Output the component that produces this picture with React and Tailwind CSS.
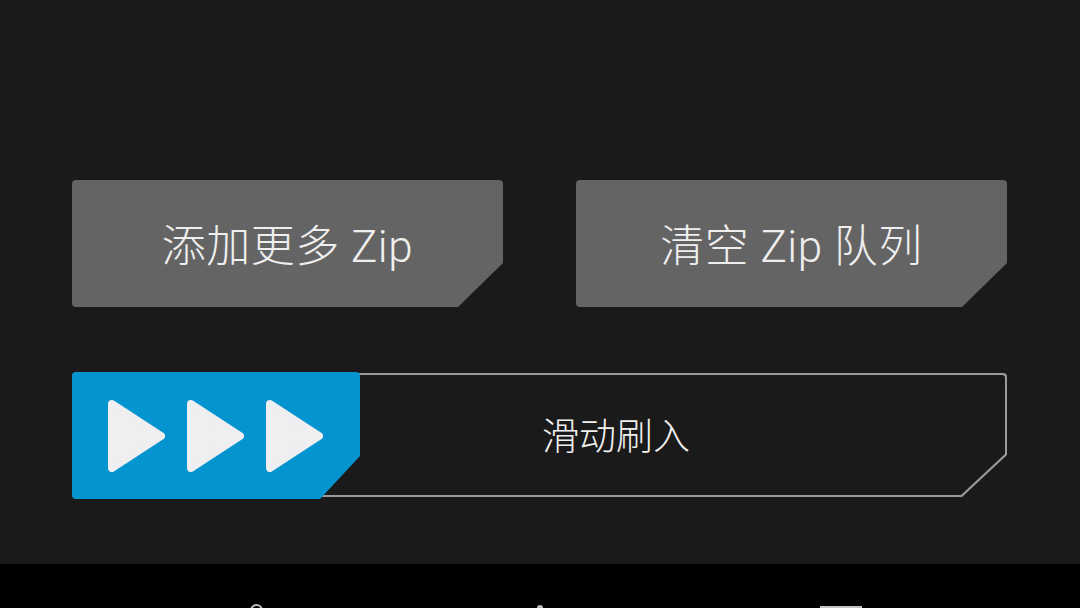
import React from "react";

function Triangle() {
  return (
    <svg width="57" height="72" viewBox="0 0 57 72" className="block">
      <polygon
        points="4,4 53,36 4,68"
        fill="#efeef0"
        stroke="#efeef0"
        strokeWidth="8"
        strokeLinejoin="round"
      />
    </svg>
  );
}

function CutButton({ children }) {
  return (
    <button className="w-[431px] h-[127px] bg-[#656464] rounded-[4px] [clip-path:polygon(0_0,100%_0,100%_calc(100%_-_44px),calc(100%_-_45px)_100%,0_100%)] flex items-center justify-center text-[44px] font-light leading-none text-[#efefef] pt-[6px] tracking-[0.5px]">
      {children}
    </button>
  );
}

export default function App() {
  return (
    <div
      className="w-[1080px] h-[608px] flex flex-col bg-[#1b1a1a] overflow-hidden"
      style={{ fontFamily: '"Roboto", "Noto Sans CJK SC", sans-serif' }}
    >
      <main className="flex-1 flex flex-col pt-[180px] pl-[72px] pr-[73px]">
        <div className="flex gap-[73px]">
          <CutButton>添加更多 Zip</CutButton>
          <CutButton>清空 Zip 队列</CutButton>
        </div>
        <div className="mt-[66px] h-[124px] relative">
          <div className="h-full bg-[#9b9b9b] rounded-[4px] p-[2px] [clip-path:polygon(0_0,100%_0,100%_calc(100%_-_42px),calc(100%_-_45px)_100%,0_100%)]">
            <div className="h-full bg-[#1b1a1a] rounded-[3px] [clip-path:polygon(0_0,100%_0,100%_calc(100%_-_41px),calc(100%_-_44px)_100%,0_100%)] flex items-center pl-[468px] pt-[5px]">
              <span className="text-[37px] font-light leading-none text-[#f0f0f0]">滑动刷入</span>
            </div>
          </div>
          <div className="absolute left-0 top-[-1px] bottom-[-2px] w-[288px] bg-[#0494cf] rounded-[4px] [clip-path:polygon(0_0,100%_0,100%_calc(100%_-_43px),calc(100%_-_40px)_100%,0_100%)] flex items-center gap-[22px] pl-[36px]">
            <Triangle />
            <Triangle />
            <Triangle />
          </div>
        </div>
      </main>
      <nav className="h-[44px] bg-black flex items-start overflow-hidden">
        <div className="ml-[250px] mt-[40px] w-[13px] h-[13px] rounded-full border-2 border-[#bdbdbd]" />
        <div className="ml-[274px] mt-[41px] w-[6px] h-[4px] rounded-t-[3px] bg-[#bdbdbd]" />
        <div className="ml-[277px] mt-[42px] w-[42px] h-[20px] border-2 border-[#c4c4c4]" />
      </nav>
    </div>
  );
}
